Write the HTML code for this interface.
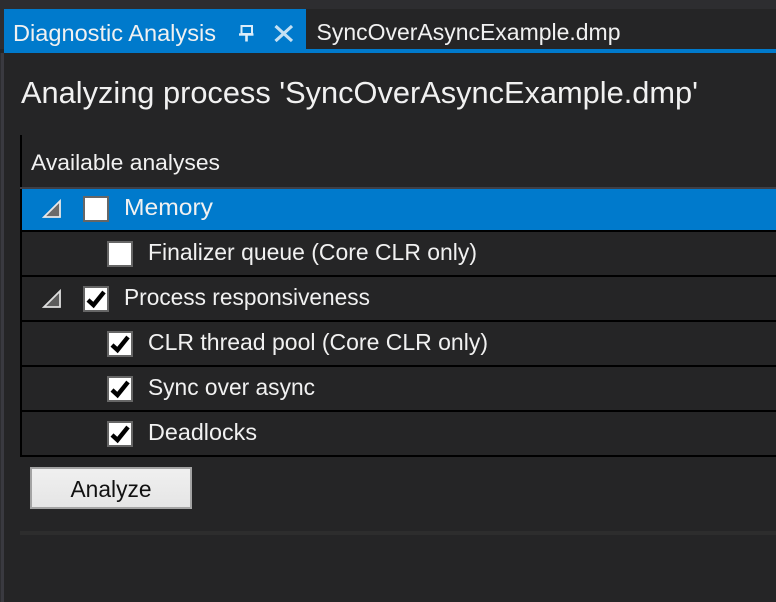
<!DOCTYPE html>
<html>
<head>
<meta charset="utf-8">
<style>
html,body{margin:0;padding:0;background:#252526;width:776px;height:602px;overflow:hidden}
svg{display:block}
text{font-family:"Liberation Sans",sans-serif;fill:#f1f1f1}
</style>
</head>
<body>
<svg width="776" height="602" viewBox="0 0 776 602" xmlns="http://www.w3.org/2000/svg">
<rect width="776" height="602" fill="#252526"/>
<rect width="776" height="49" fill="#2d2d30"/>
<rect x="0" y="53" width="1" height="549" fill="#2d2d30"/>
<rect x="1" y="53" width="3" height="549" fill="#3a3a40"/>
<rect x="306" y="9" width="470" height="40" fill="#252526"/>
<rect x="4" y="9" width="302" height="44" fill="#007acc"/>
<rect x="306" y="49" width="470" height="4" fill="#007acc"/>

<text x="13" y="41" font-size="23" fill="#ffffff" textLength="203" lengthAdjust="spacingAndGlyphs">Diagnostic Analysis</text>
<path d="M241.500 26h10.500v8h-10.500z" fill="none" stroke="#dcedf9" stroke-width="2"/>
<path d="M239 34.500h14.500" fill="none" stroke="#dcedf9" stroke-width="2.400"/>
<path d="M246.500 34v7.500" fill="none" stroke="#dcedf9" stroke-width="2.600"/>
<path d="M275.500 26l16.500 15M292 26l-16.500 15" fill="none" stroke="#c4e0f3" stroke-width="3.200"/>
<text x="316.500" y="40" font-size="23" textLength="304" lengthAdjust="spacingAndGlyphs">SyncOverAsyncExample.dmp</text>

<text x="21" y="103" font-size="31" textLength="677" lengthAdjust="spacingAndGlyphs">Analyzing process 'SyncOverAsyncExample.dmp'</text>

<text x="31" y="170" font-size="22.500" textLength="189" lengthAdjust="spacingAndGlyphs">Available analyses</text>

<rect x="20" y="135" width="2" height="322" fill="#000"/>
<rect x="20" y="187" width="756" height="2" fill="#3f3f46"/>
<rect x="20" y="189" width="2" height="41" fill="#000"/>
<rect x="22" y="189" width="754" height="41" fill="#007acc"/>
<rect x="20" y="230" width="756" height="2" fill="#000"/>
<rect x="20" y="275" width="756" height="2" fill="#000"/>
<rect x="20" y="320" width="756" height="2" fill="#000"/>
<rect x="20" y="365" width="756" height="2" fill="#000"/>
<rect x="20" y="410" width="756" height="2" fill="#000"/>
<rect x="20" y="455" width="756" height="2" fill="#000"/>

<path d="M60 201v16h-16z" fill="#6b6b6b" stroke="#e8e8e8" stroke-width="1.800"/>
<path d="M60 291v16h-16z" fill="#5c5c5c" stroke="#dedede" stroke-width="1.800"/>

<rect x="84" y="197" width="24" height="24" fill="#fff" stroke="#666" stroke-width="2"/>
<rect x="108" y="242" width="24" height="24" fill="#fff" stroke="#666" stroke-width="2"/>
<rect x="84" y="287" width="24" height="24" fill="#fff" stroke="#666" stroke-width="2"/>
<rect x="108" y="332" width="24" height="24" fill="#fff" stroke="#666" stroke-width="2"/>
<rect x="108" y="377" width="24" height="24" fill="#fff" stroke="#666" stroke-width="2"/>
<rect x="108" y="422" width="24" height="24" fill="#fff" stroke="#666" stroke-width="2"/>

<g fill="none" stroke="#000" stroke-width="4.400">
<path d="M88 300l5.500 5 10.500-13"/>
<path d="M112 345l5.500 5 10.500-13"/>
<path d="M112 390l5.500 5 10.500-13"/>
<path d="M112 435l5.500 5 10.500-13"/>
</g>

<text x="124" y="215" font-size="23" fill="#fff" textLength="89" lengthAdjust="spacingAndGlyphs">Memory</text>
<text x="148" y="260" font-size="23" textLength="329" lengthAdjust="spacingAndGlyphs">Finalizer queue (Core CLR only)</text>
<text x="124" y="305" font-size="23" textLength="246" lengthAdjust="spacingAndGlyphs">Process responsiveness</text>
<text x="148" y="350" font-size="23" textLength="340" lengthAdjust="spacingAndGlyphs">CLR thread pool (Core CLR only)</text>
<text x="148" y="395" font-size="23" textLength="167" lengthAdjust="spacingAndGlyphs">Sync over async</text>
<text x="148" y="440" font-size="23" textLength="109" lengthAdjust="spacingAndGlyphs">Deadlocks</text>

<defs>
<linearGradient id="b" x1="0" y1="0" x2="0" y2="1">
<stop offset="0" stop-color="#f0f0f0"/>
<stop offset="1" stop-color="#e5e5e5"/>
</linearGradient>
</defs>
<rect x="31" y="468" width="160" height="40" fill="url(#b)" stroke="#a3a3a3" stroke-width="2"/>
<text x="70.500" y="497" font-size="23" style="fill:#111" textLength="81" lengthAdjust="spacingAndGlyphs">Analyze</text>

<rect x="20" y="531" width="756" height="4" fill="#2d2d2d"/>
</svg>
</body>
</html>
